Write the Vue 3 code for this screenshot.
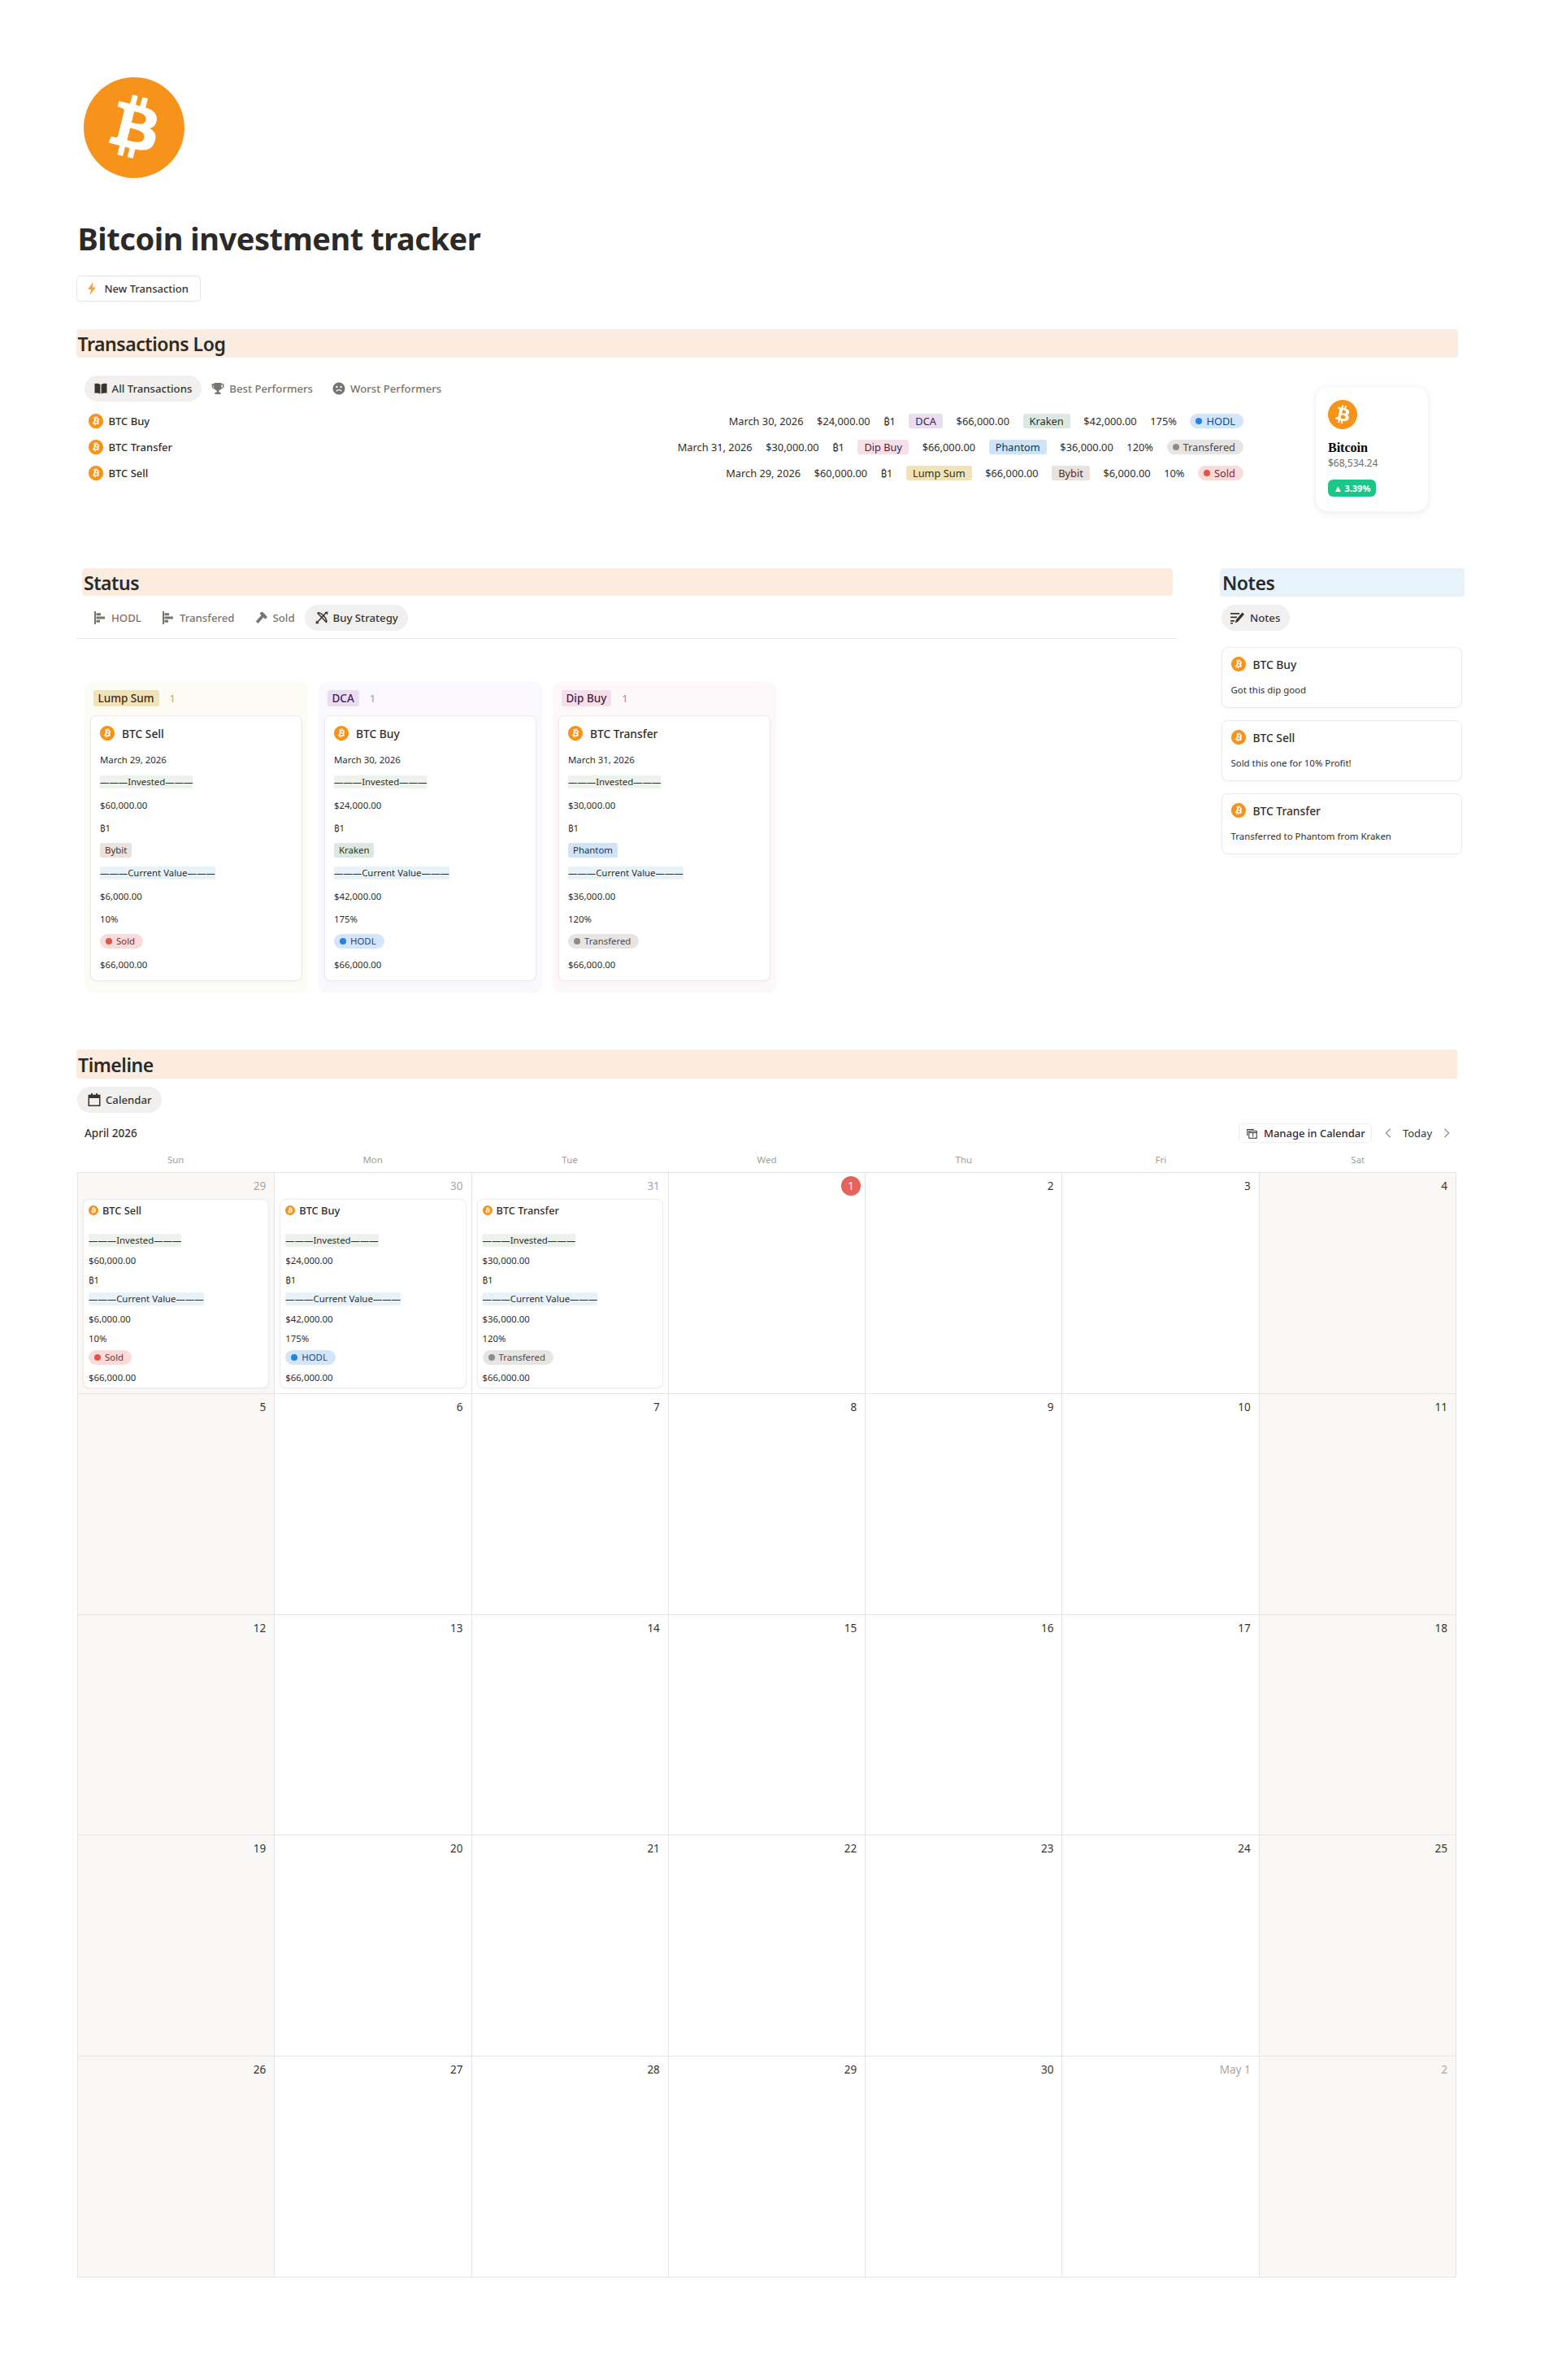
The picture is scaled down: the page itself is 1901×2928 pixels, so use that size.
<script setup>
const logRows = [
  { name: 'BTC Buy', date: 'March 30, 2026', invested: '$24,000.00', tag: 'DCA', tagC: 'purple', exch: 'Kraken', exchC: 'green', cur: '$42,000.00', pct: '175%', status: 'HODL', statusC: 'blue' },
  { name: 'BTC Transfer', date: 'March 31, 2026', invested: '$30,000.00', tag: 'Dip Buy', tagC: 'pink', exch: 'Phantom', exchC: 'sky', cur: '$36,000.00', pct: '120%', status: 'Transfered', statusC: 'gray' },
  { name: 'BTC Sell', date: 'March 29, 2026', invested: '$60,000.00', tag: 'Lump Sum', tagC: 'yellow', exch: 'Bybit', exchC: 'brown', cur: '$6,000.00', pct: '10%', status: 'Sold', statusC: 'red' }
]
const byName = n => logRows.find(r => r.name === n)
const boardCols = [
  { label: 'Lump Sum', c: 'yellow', row: byName('BTC Sell') },
  { label: 'DCA', c: 'purple', row: byName('BTC Buy') },
  { label: 'Dip Buy', c: 'pink', row: byName('BTC Transfer') }
]
const notes = [
  { t: 'BTC Buy', n: 'Got this dip good' },
  { t: 'BTC Sell', n: 'Sold this one for 10% Profit!' },
  { t: 'BTC Transfer', n: 'Transferred to Phantom from Kraken' }
]
const weekdays = ['Sun', 'Mon', 'Tue', 'Wed', 'Thu', 'Fri', 'Sat']
const dayLabels = ['29', '30', '31', '1', '2', '3', '4', '5', '6', '7', '8', '9', '10', '11', '12', '13', '14', '15', '16', '17', '18', '19', '20', '21', '22', '23', '24', '25', '26', '27', '28', '29', '30', 'May 1', '2']
const days = dayLabels.map((label, i) => ({
  label,
  weekend: i % 7 === 0 || i % 7 === 6,
  muted: i < 3 || i > 32,
  today: i === 3,
  row: i === 0 ? byName('BTC Sell') : i === 1 ? byName('BTC Buy') : i === 2 ? byName('BTC Transfer') : null
}))
</script>

<template>
  <div class="page">
    <svg class="defs" width="0" height="0" aria-hidden="true">
      <symbol id="btc" viewBox="0 0 24 24">
        <path fill="#f7931a" d="M23.638 14.904c-1.602 6.43-8.113 10.34-14.542 8.736C2.67 22.05-1.244 15.525.362 9.105 1.962 2.67 8.475-1.243 14.9.358c6.43 1.605 10.342 8.115 8.738 14.546z" />
        <path fill="#fff" d="M17.392 10.26c.24-1.59-.974-2.45-2.64-3.03l.54-2.153-1.315-.33-.525 2.107c-.345-.087-.705-.167-1.064-.25l.526-2.127-1.32-.33-.54 2.165c-.285-.067-.565-.132-.84-.2l-1.815-.45-.35 1.407s.975.225.955.236c.535.136.63.486.615.766l-1.477 5.92c-.075.166-.24.406-.614.314.015.02-.96-.24-.96-.24l-.66 1.51 1.71.426.93.242-.54 2.19 1.32.327.54-2.17c.36.1.705.19 1.05.273l-.51 2.154 1.32.33.545-2.19c2.24.427 3.93.257 4.64-1.774.57-1.637-.03-2.58-1.217-3.196.854-.193 1.5-.76 1.68-1.93h.01zm-3.01 4.22c-.404 1.64-3.157.75-4.05.53l.72-2.9c.896.23 3.757.67 3.33 2.37zm.41-4.24c-.37 1.49-2.662.735-3.405.55l.654-2.64c.744.18 3.137.524 2.75 2.084v.006z" />
      </symbol>
      <symbol id="bars" viewBox="0 0 16 16">
        <path fill="currentColor" d="M1 0h2v16H1zM3.500 2.200h5.500v3H3.500zM3.500 6.500H14v3H3.500zM3.500 10.800H8v3H3.500z" />
      </symbol>
    </svg>

    <svg class="logo" viewBox="0 0 24 24"><use href="#btc" /></svg>
    <h1 class="title">Bitcoin investment tracker</h1>
    <div class="newbtn">
      <svg class="bolt" viewBox="0 0 12 16"><path fill="#f2a33a" d="M7.500 0 1 9h4l-1.500 7L11 6.500H6.800z" /></svg>
      <span>New Transaction</span>
    </div>

    <h2 class="band log-band">Transactions Log</h2>

    <section class="log">
      <div class="log-main">
        <div class="tabs log-tabs">
          <span class="tab on">
            <svg class="ti" viewBox="0 0 16 16"><path fill="currentColor" d="M.5 2.200C2.800 1.600 5.300 1.800 7.400 3v11.400C5.300 13.300 2.800 13.200.5 13.700zM15.500 2.200C13.200 1.600 10.700 1.800 8.600 3v11.400c2.100-1.100 4.600-1.200 6.900-.7z" /></svg>
            All Transactions
          </span>
          <span class="tab">
            <svg class="ti" viewBox="0 0 16 16"><path fill="currentColor" d="M3.500 1h9v1.200h3V5c0 2-1.500 3.200-3.500 3.400-.6 1.100-1.500 1.800-2.800 2V12.500h2.300V15H4.500v-2.500h2.300v-2.100c-1.300-.2-2.200-.9-2.800-2C2 8.200.500 7 .500 5V2.200h3zM1.800 3.500V5c0 .9.600 1.700 1.800 2zM14.200 3.500h-1.800V7c1.200-.3 1.800-1.100 1.800-2z" /></svg>
            Best Performers
          </span>
          <span class="tab">
            <svg class="ti" viewBox="0 0 16 16"><path fill="currentColor" fill-rule="evenodd" d="M8 .5a7.500 7.500 0 1 1 0 15 7.500 7.500 0 0 1 0-15zM5.400 4.700a1.200 1.200 0 1 0 0 2.400 1.200 1.200 0 0 0 0-2.400zM10.600 4.700a1.200 1.200 0 1 0 0 2.400 1.200 1.200 0 0 0 0-2.400zM8 9c-1.700 0-3 .9-3.600 2.300l1.100.5C6 10.800 6.900 10.300 8 10.300s2 .5 2.500 1.500l1.100-.5C11 9.900 9.700 9 8 9z" /></svg>
            Worst Performers
          </span>
        </div>
        <div v-for="r in logRows" :key="r.name" class="log-row">
          <svg class="ico"><use href="#btc" /></svg>
          <span class="log-name">{{ r.name }}</span>
          <span class="log-props">
            <span>{{ r.date }}</span>
            <span>{{ r.invested }}</span>
            <span>₿1</span>
            <span class="tag" :class="r.tagC">{{ r.tag }}</span>
            <span>$66,000.00</span>
            <span class="tag" :class="r.exchC">{{ r.exch }}</span>
            <span>{{ r.cur }}</span>
            <span>{{ r.pct }}</span>
            <span class="stat" :class="r.statusC"><i></i>{{ r.status }}</span>
          </span>
        </div>
      </div>
      <aside class="coin">
        <svg class="coin-ico"><use href="#btc" /></svg>
        <div class="coin-name">Bitcoin</div>
        <div class="coin-price">$68,534.24</div>
        <div class="coin-up">▲ 3.39%</div>
      </aside>
    </section>

    <div class="split">
      <section class="status">
        <h2 class="band status-band">Status</h2>
        <div class="tabs status-tabs">
          <span class="tab"><svg class="ti"><use href="#bars" /></svg>HODL</span>
          <span class="tab"><svg class="ti"><use href="#bars" /></svg>Transfered</span>
          <span class="tab">
            <svg class="ti" viewBox="0 0 16 16"><path fill="currentColor" d="M6.500 1.500 9 .8l6 6.200-2.600 2.700-2.300-2.200L3.500 15 .8 12.400 7.600 5 5.600 2.900z" /></svg>
            Sold
          </span>
          <span class="tab on">
            <svg class="ti" viewBox="0 0 16 16" fill="none" stroke="currentColor" stroke-width="1.500"><path d="M3 1.500c5 .5 10.500 6 11 11.500M2.500 2 14 14M13 2 3 13" /><path fill="currentColor" stroke="none" d="M15.500.5 15 4.500 11.500 1zM.5 15.500l.7-4.300 3.600 3.600z" /></svg>
            Buy Strategy
          </span>
        </div>
        <div class="board">
          <div v-for="c in boardCols" :key="c.label" class="col" :class="'col-' + c.c">
            <div class="col-head">
              <span class="tag head-tag" :class="c.c">{{ c.label }}</span>
              <span class="count">1</span>
            </div>
            <div class="card">
              <div class="card-title"><svg class="ico"><use href="#btc" /></svg>{{ c.row.name }}</div>
              <div class="line">{{ c.row.date }}</div>
              <div class="line"><span class="hl hl-g">———Invested———</span></div>
              <div class="line">{{ c.row.invested }}</div>
              <div class="line">₿1</div>
              <div class="line"><span class="tag" :class="c.row.exchC">{{ c.row.exch }}</span></div>
              <div class="line"><span class="hl hl-b">———Current Value———</span></div>
              <div class="line">{{ c.row.cur }}</div>
              <div class="line">{{ c.row.pct }}</div>
              <div class="line"><span class="stat" :class="c.row.statusC"><i></i>{{ c.row.status }}</span></div>
              <div class="line">$66,000.00</div>
            </div>
          </div>
        </div>
      </section>

      <section class="notes">
        <h2 class="band notes-band">Notes</h2>
        <span class="tab on notes-tab">
          <svg class="ti" viewBox="0 0 18 16"><path fill="currentColor" d="M0 2h11v1.700H0zM0 6.500h8v1.700H0zM0 11h5v1.700H0zM0 14h3v1.500H0zM14.500 1.500l2.500 2.300L9 13l-3.300 1.200 1-3.500z" /></svg>
          Notes
        </span>
        <div v-for="n in notes" :key="n.t" class="note">
          <div class="card-title note-title"><svg class="ico"><use href="#btc" /></svg>{{ n.t }}</div>
          <div class="note-text">{{ n.n }}</div>
        </div>
      </section>
    </div>

    <h2 class="band time-band">Timeline</h2>
    <span class="tab on cal-tab">
      <svg class="ti" viewBox="0 0 16 16"><path fill="currentColor" fill-rule="evenodd" d="M4 0h1.800v1.800h4.400V0H12v1.800h3.500V16H.5V1.800H4zM2 6v8.500h12V6z" /></svg>
      Calendar
    </span>
    <div class="cal-bar">
      <span class="month">April 2026</span>
      <span class="manage">
        <svg class="mi" viewBox="0 0 14 14" fill="none" stroke="currentColor" stroke-width="1.100"><path d="M.8 10V1.600h9M3 13.200V3.800h10.200v9.400zM3 6h10.200" /><path stroke-width="1" d="M7.200 7.500 8.300 7v4.500" /></svg>
        Manage in Calendar
      </span>
      <span class="nav">
        <svg class="chev" viewBox="0 0 10 16"><path fill="none" stroke="#8f8e8b" stroke-width="1.400" d="M8 2 2 8l6 6" /></svg>
        <span class="today">Today</span>
        <svg class="chev" viewBox="0 0 10 16"><path fill="none" stroke="#8f8e8b" stroke-width="1.400" d="m2 2 6 6-6 6" /></svg>
      </span>
    </div>
    <div class="weekdays"><span v-for="w in weekdays" :key="w">{{ w }}</span></div>
    <div class="grid">
      <div v-for="(d, i) in days" :key="i" class="cell" :class="{ wk: d.weekend }">
        <div class="num" :class="{ muted: d.muted }">
          <span v-if="d.today" class="todaydot">{{ d.label }}</span>
          <template v-else>{{ d.label }}</template>
        </div>
        <div v-if="d.row" class="ev">
          <div class="ev-title"><svg class="ev-ico"><use href="#btc" /></svg>{{ d.row.name }}</div>
          <div class="ev-gap"></div>
          <div class="ev-line"><span class="hl hl-g">———Invested———</span></div>
          <div class="ev-line">{{ d.row.invested }}</div>
          <div class="ev-line">₿1</div>
          <div class="ev-line"><span class="hl hl-b">———Current Value———</span></div>
          <div class="ev-line">{{ d.row.cur }}</div>
          <div class="ev-line">{{ d.row.pct }}</div>
          <div class="ev-line"><span class="stat" :class="d.row.statusC"><i></i>{{ d.row.status }}</span></div>
          <div class="ev-line">$66,000.00</div>
        </div>
      </div>
    </div>
  </div>
</template>

<style>
html, body { margin: 0; background: #fff; }
</style>

<style scoped>
.page {
  width: 1901px;
  height: 2928px;
  box-sizing: border-box;
  overflow: hidden;
  padding-top: 95px;
  font-family: "Noto Sans", "Open Sans", sans-serif;
  color: #2f2e2b;
  font-size: 12.800px;
}
.defs { position: absolute; }
.logo { display: block; width: 124px; height: 124px; margin-left: 103px; }
.title {
  margin: 50px 0 0 95.500px;
  font-size: 38px;
  letter-spacing: -.45px;
  line-height: 48px;
  font-weight: 700;
  color: #2b2a28;
}
.newbtn {
  margin: 22px 0 0 93.500px;
  width: 153px;
  height: 32px;
  box-sizing: border-box;
  display: flex;
  align-items: center;
  border: 1px solid #e6e5e3;
  border-radius: 5px;
  padding-left: 12px;
  gap: 10px;
  font-size: 13px;
  font-weight: 500;
  color: #37352f;
}
.bolt { width: 12px; height: 16px; }
.band {
  margin: 0;
  font-size: 23px;
  letter-spacing: -.45px;
  font-weight: 600;
  line-height: 37px;
  height: 35px;
  background: #fcebdf;
  border-radius: 4px;
  color: #2b2a28;
  padding-left: 2px;
}
.log-band { margin: 34px 0 0 93.500px; width: 1700px; box-sizing: border-box; }
.log { display: flex; margin-left: 103.500px; width: 1654.500px; align-items: flex-start; }
.log-main { flex: 1; padding-top: 22px; padding-right: 88px; min-width: 0; }
.tabs { display: flex; align-items: center; gap: 0; }
.log-tabs { margin-bottom: 8px; }
.tab {
  display: inline-flex;
  align-items: center;
  gap: 6px;
  height: 32px;
  box-sizing: border-box;
  padding: 0 12px;
  border-radius: 16px;
  font-size: 13.200px;
  font-weight: 500;
  color: #77756f;
  white-space: nowrap;
}
.tab.on { background: #f1f0ee; color: #37352f; }
.ti { width: 16px; height: 16px; flex: none; }
.log-row { display: flex; align-items: center; height: 32px; padding-left: 5px; }
.ico { width: 18px; height: 18px; flex: none; }
.log-name { margin-left: 7px; font-weight: 500; font-size: 13px; color: #2f2e2b; }
.log-props { margin-left: auto; display: flex; align-items: center; gap: 16.600px; white-space: nowrap; }
.tag {
  display: inline-block;
  height: 18px;
  line-height: 18px;
  padding: 0 8px;
  border-radius: 3px;
  font-size: 12.800px;
}
.purple { background: #e8deee; color: #412454; }
.green { background: #dbe8df; color: #1c3829; }
.pink { background: #f5e0e9; color: #4c2337; }
.sky { background: #cfe4f7; color: #183347; }
.yellow { background: #f0e3b6; color: #402c1b; }
.brown { background: #ebe2de; color: #44322a; }
.stat {
  display: inline-flex;
  align-items: center;
  gap: 5px;
  height: 18px;
  padding: 0 10px 0 7px;
  border-radius: 9px;
  font-size: 12.800px;
  line-height: 18px;
}
.stat i { width: 8px; height: 8px; border-radius: 50%; }
.stat.blue { background: #d3e5fa; color: #1f4a78; }
.stat.blue i { background: #2383e2; }
.stat.gray { background: #e6e5e3; color: #4d4c49; }
.stat.gray i { background: #8d8c8a; }
.stat.red { background: #f9dcda; color: #7d2b27; }
.stat.red i { background: #e5534b; }

.coin {
  width: 140px;
  height: 155px;
  flex: none;
  margin-top: 35px;
  box-sizing: border-box;
  padding: 16px 15px;
  border-radius: 16px;
  background: #fff;
  box-shadow: 0 2px 8px rgba(0, 0, 0, .07);
  border: 1px solid #f6f6f6;
}
.coin-ico { display: block; width: 36px; height: 36px; }
.coin-name {
  margin-top: 13px;
  font-family: "Liberation Serif", serif;
  font-weight: 700;
  font-size: 16px;
  line-height: 20px;
  color: #000;
}
.coin-price { font-size: 12px; line-height: 18px; color: #6d6d6d; }
.coin-up {
  margin-top: 11px;
  width: 59px;
  height: 21px;
  border-radius: 6px;
  background: #1cc688;
  color: #fff;
  font-size: 11px;
  font-weight: 700;
  line-height: 21px;
  text-align: center;
  white-space: nowrap;
}

.split { display: flex; margin-top: 69px; align-items: flex-start; height: 592px; }
.status { width: 1355px; margin-left: 94px; flex: none; }
.status-band { margin-left: 7px; width: 1342px; box-sizing: border-box; height: 34px; line-height: 36px; }
.status-tabs {
  margin-top: 11px;
  padding: 0 0 9px 8.500px;
  border-bottom: 1px solid #e9e9e7;
  height: 32px;
}
.status-tabs .tab { padding: 0 12.500px; }
.board { display: flex; gap: 13px; margin: 53px 0 0 10px; }
.col { width: 275px; height: 383px; box-sizing: border-box; border-radius: 10px; padding: 10px 7px; }
.col-yellow { background: #fcfbf4; }
.col-purple { background: #faf8fd; }
.col-pink { background: #fcf8f9; }
.col-head { height: 20px; display: flex; align-items: center; padding-left: 3.500px; gap: 13px; }
.head-tag { height: 20px; line-height: 20px; padding: 0 6px; font-size: 13.500px; font-weight: 500; }
.col-yellow .count { color: #c9a55a; }
.col-purple .count { color: #a58bc4; }
.col-pink .count { color: #c8779c; }
.count { font-size: 13px; }
.card {
  margin-top: 11px;
  height: 327px;
  box-sizing: border-box;
  background: #fff;
  border: 1px solid #ecebe9;
  border-radius: 8px;
  padding: 12px 11px 0;
  box-shadow: 0 1px 3px rgba(0, 0, 0, .04);
  font-size: 11.400px;
}
.card-title {
  display: flex;
  align-items: center;
  gap: 9px;
  height: 18px;
  font-size: 13.800px;
  font-weight: 500;
  color: #2f2e2b;
  margin-bottom: 9px;
}
.line { height: 28px; display: flex; align-items: center; }
.card .tag { font-size: 11.400px; padding: 0 6px; }
.card .stat, .ev .stat { font-size: 11.400px; }
.hl { display: inline-block; height: 15.500px; line-height: 15.500px; white-space: nowrap; }
.hl-g { background: #edf3ec; }
.hl-b { background: #e7f3f8; }

.notes { width: 310px; margin-left: 52px; flex: none; }
.notes-band { background: #e7f3fb; width: 301px; box-sizing: border-box; padding-left: 3px; }
.notes-tab { margin: 10px 0 0 2px; padding: 0 12px 0 11px; display: inline-flex; }
.notes-tab .ti { width: 18px; }
.note {
  margin: 15px 0 0 1.500px;
  width: 296px;
  height: 75px;
  box-sizing: border-box;
  background: #fff;
  border: 1px solid #ecebe9;
  border-radius: 8px;
  padding: 11px 11px 0;
  box-shadow: 0 1px 3px rgba(0, 0, 0, .04);
}
.notes-tab + .note { margin-top: 20px; }
.note-title { margin-bottom: 14px; }
.note-text { font-size: 11.400px; line-height: 18px; }

.time-band { margin: 0 0 0 94px; width: 1699px; height: 36px; line-height: 38px; box-sizing: border-box; }
.cal-tab { margin: 10px 0 0 95px; padding: 0 12px 0 13px; display: inline-flex; }
.cal-bar { display: flex; align-items: center; height: 24px; margin: 13px 0 0 104px; width: 1681px; }
.month { font-size: 13.500px; font-weight: 500; color: #37352f; }
.manage {
  margin-left: auto;
  display: inline-flex;
  align-items: center;
  gap: 8px;
  height: 24px;
  box-sizing: border-box;
  width: 164px;
  padding-left: 9px;
  border: 1px solid #efeeec;
  border-radius: 5px;
  font-size: 13px;
  font-weight: 500;
  white-space: nowrap;
}
.mi { width: 13px; height: 13px; flex: none; }
.nav { display: inline-flex; align-items: center; margin-left: 15px; width: 82px; justify-content: space-between; }
.today { font-size: 13px; color: #37352f; }
.chev { width: 10px; height: 14px; }
.weekdays {
  display: grid;
  grid-template-columns: repeat(7, 1fr);
  margin: 9px 0 0 95px;
  width: 1697px;
  height: 27px;
  line-height: 23px;
  text-align: center;
  font-size: 11.500px;
  color: #a09f9b;
}
.grid {
  display: grid;
  grid-template-columns: repeat(7, 1fr);
  grid-auto-rows: 271.800px;
  margin-left: 95px;
  width: 1697px;
  box-sizing: border-box;
  border-top: 1px solid #e6e5e3;
  border-left: 1px solid #e6e5e3;
}
.cell { border-right: 1px solid #e6e5e3; border-bottom: 1px solid #e6e5e3; padding: 0 6px; min-width: 0; }
.cell.wk { background: #f9f8f6; }
.num {
  height: 32px;
  display: flex;
  justify-content: flex-end;
  align-items: center;
  padding: 0 4px 0 0;
  font-size: 13.500px;
  color: #37352f;
}
.num.muted { color: #a8a7a3; }
.todaydot {
  width: 24px;
  height: 24px;
  border-radius: 50%;
  background: #e5635a;
  color: #fff;
  text-align: center;
  line-height: 24px;
  margin-right: -5px;
}
.ev {
  height: 233px;
  box-sizing: border-box;
  background: #fff;
  border: 1px solid #ecebe9;
  border-radius: 8px;
  padding: 6px 6px 0;
  box-shadow: 0 1px 3px rgba(0, 0, 0, .05);
  font-size: 11.400px;
}
.ev-title { display: flex; align-items: center; gap: 5px; height: 14px; font-size: 12.800px; font-weight: 500; color: #2f2e2b; }
.ev-ico { width: 12px; height: 12px; flex: none; }
.ev-gap { height: 18px; }
.ev-line { height: 24px; display: flex; align-items: center; }
</style>
